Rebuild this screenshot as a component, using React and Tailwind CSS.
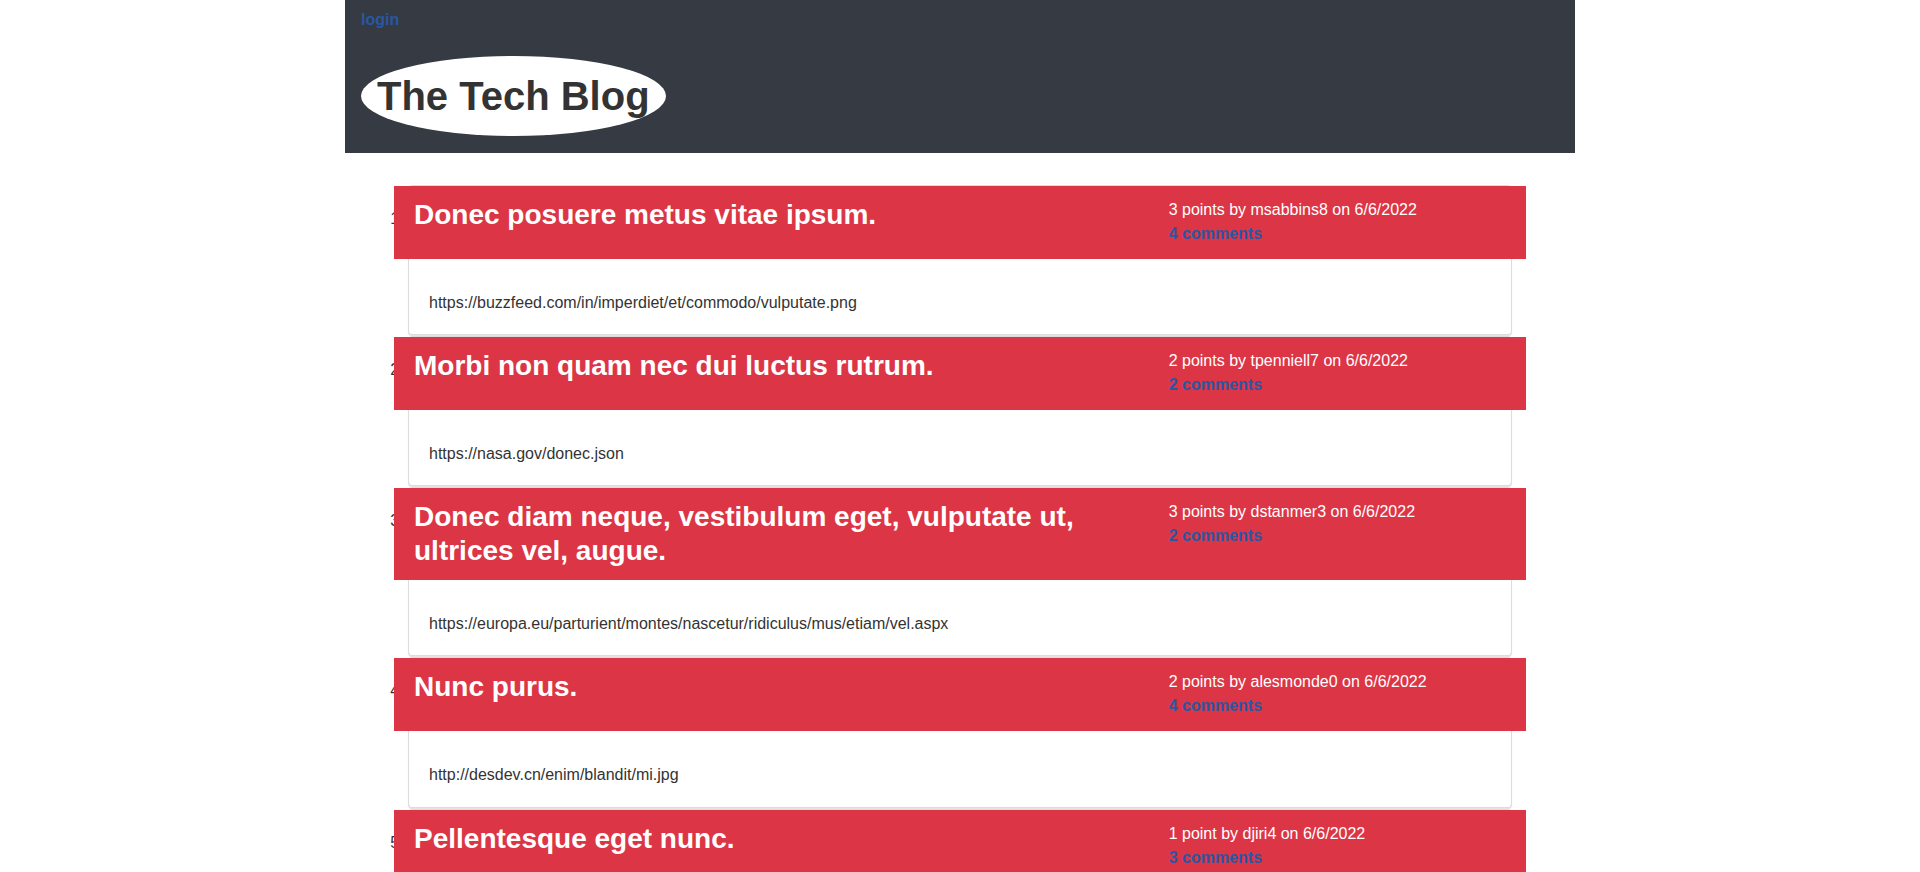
import React from "react";

const posts = [
  {
    title: "Donec posuere metus vitae ipsum.",
    meta: "3 points by msabbins8 on 6/6/2022",
    comments: "4 comments",
    url: "https://buzzfeed.com/in/imperdiet/et/commodo/vulputate.png",
  },
  {
    title: "Morbi non quam nec dui luctus rutrum.",
    meta: "2 points by tpenniell7 on 6/6/2022",
    comments: "2 comments",
    url: "https://nasa.gov/donec.json",
  },
  {
    title: "Donec diam neque, vestibulum eget, vulputate ut, ultrices vel, augue.",
    meta: "3 points by dstanmer3 on 6/6/2022",
    comments: "2 comments",
    url: "https://europa.eu/parturient/montes/nascetur/ridiculus/mus/etiam/vel.aspx",
  },
  {
    title: "Nunc purus.",
    meta: "2 points by alesmonde0 on 6/6/2022",
    comments: "4 comments",
    url: "http://desdev.cn/enim/blandit/mi.jpg",
  },
  {
    title: "Pellentesque eget nunc.",
    meta: "1 point by djiri4 on 6/6/2022",
    comments: "3 comments",
    url: "https://wikia.com/sapien/cursus/vestibulum.html",
  },
];

export default function App() {
  return (
    <div
      className="min-h-screen bg-white text-[#333] text-[16px] leading-[24px]"
      style={{ fontFamily: '"Liberation Sans", Arial, sans-serif' }}
    >
      <div className="w-[1230px] mx-auto">
        <header className="bg-[#363a42] pt-2 pb-[17px] px-4">
          <div>
            <a href="#" className="font-bold text-[#2957a4]">
              login
            </a>
          </div>
          <div className="mt-6">
            <h1 className="inline-block bg-white rounded-[50%] p-4 text-[40px] leading-[48px] font-bold text-[#333]">
              The Tech Blog
            </h1>
          </div>
        </header>
        <ol className="list-decimal list-outside mt-8 pl-[63px] pr-[63px]">
          {posts.map((p, i) => (
            <li key={i} className="mb-px">
              <div className="border border-[#dcdcdc] rounded shadow-[0_1px_1px_rgba(0,0,0,0.12)] bg-white">
                <div className="relative flex mx-[-15px] text-white">
                  <div className="w-2/3 bg-[#dc3545] pl-5 pr-4 pt-3 pb-[12.6px]">
                    <h2 className="text-[28px] leading-[1.2] font-bold">{p.title}</h2>
                  </div>
                  <div className="w-1/3 bg-[#dc3545] pl-5 pr-4 pt-3 pb-[12.6px]">
                    <div>{p.meta}</div>
                    <div>
                      <a href="#" className="font-bold text-[#2957a4]">
                        {p.comments}
                      </a>
                    </div>
                  </div>
                </div>
                <div className="px-5 pt-[32px] pb-[19.5px]">{p.url}</div>
              </div>
            </li>
          ))}
        </ol>
      </div>
    </div>
  );
}
